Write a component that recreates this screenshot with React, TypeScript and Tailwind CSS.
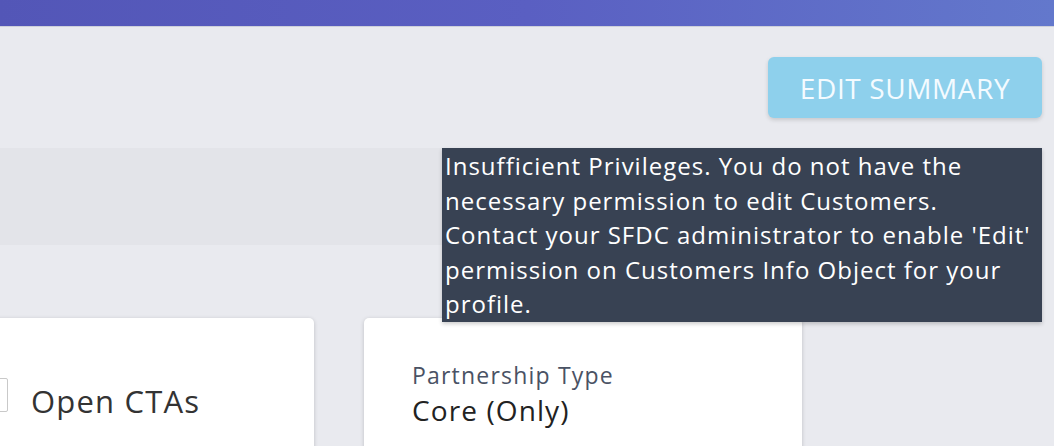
import React from "react";

export default function App() {
  return (
    <div className="relative w-[1054px] h-[446px] overflow-hidden bg-[#e9eaef] font-['Open_Sans',_'Lato',_sans-serif]">
      <div className="h-[27px] bg-gradient-to-r from-[#5356b7] via-[#5a5fc2] to-[#6378cc] border-b border-[#cdd0da]" />
      <div className="flex justify-end pr-[12px] pt-[30px]">
        <button className="w-[274px] h-[61px] rounded-[6px] bg-[#8ed0ec] text-[#f4fbff] text-[28px] tracking-[0.6px] shadow-[0_2px_4px_rgba(0,0,0,0.15)]">
          EDIT SUMMARY
        </button>
      </div>
      <div className="mt-[30px] mr-[12px] h-[97px] bg-[#e3e4e9]" />
      <div className="mt-[73px] flex gap-[50px] ml-[-86px]">
        <div className="w-[400px] h-[200px] bg-white rounded-[5px] shadow-[0_1px_4px_rgba(0,0,0,0.18)] flex items-start pt-[60px]">
          <div className="ml-[60px] w-[34px] h-[34px] border border-[#c9c9c9] rounded-[2px]" />
          <span className="ml-[23px] mt-[3px] text-[31px] tracking-[1.2px] text-[#333] leading-[40px]">Open CTAs</span>
        </div>
        <div className="w-[438px] h-[200px] bg-white rounded-[5px] shadow-[0_1px_4px_rgba(0,0,0,0.18)] pl-[48px] pt-[42px]">
          <div className="text-[23px] tracking-[1.2px] leading-[30px] text-[#4a5264]">Partnership Type</div>
          <div className="mt-[2px] text-[28px] tracking-[1.1px] leading-[36px] text-[#222]">Core (Only)</div>
        </div>
      </div>
      <div className="absolute left-[442px] top-[148px] w-[600px] h-[174px] bg-[#384253] text-white text-[24px] tracking-[1px] leading-[34.5px] pl-[3px] pr-[4px] pt-[1px] shadow-[0_2px_4px_rgba(0,0,0,0.2)]">
        Insufficient Privileges. You do not have the necessary permission to edit Customers. Contact your SFDC administrator to enable 'Edit' permission on Customers Info Object for your profile.
      </div>
    </div>
  );
}
